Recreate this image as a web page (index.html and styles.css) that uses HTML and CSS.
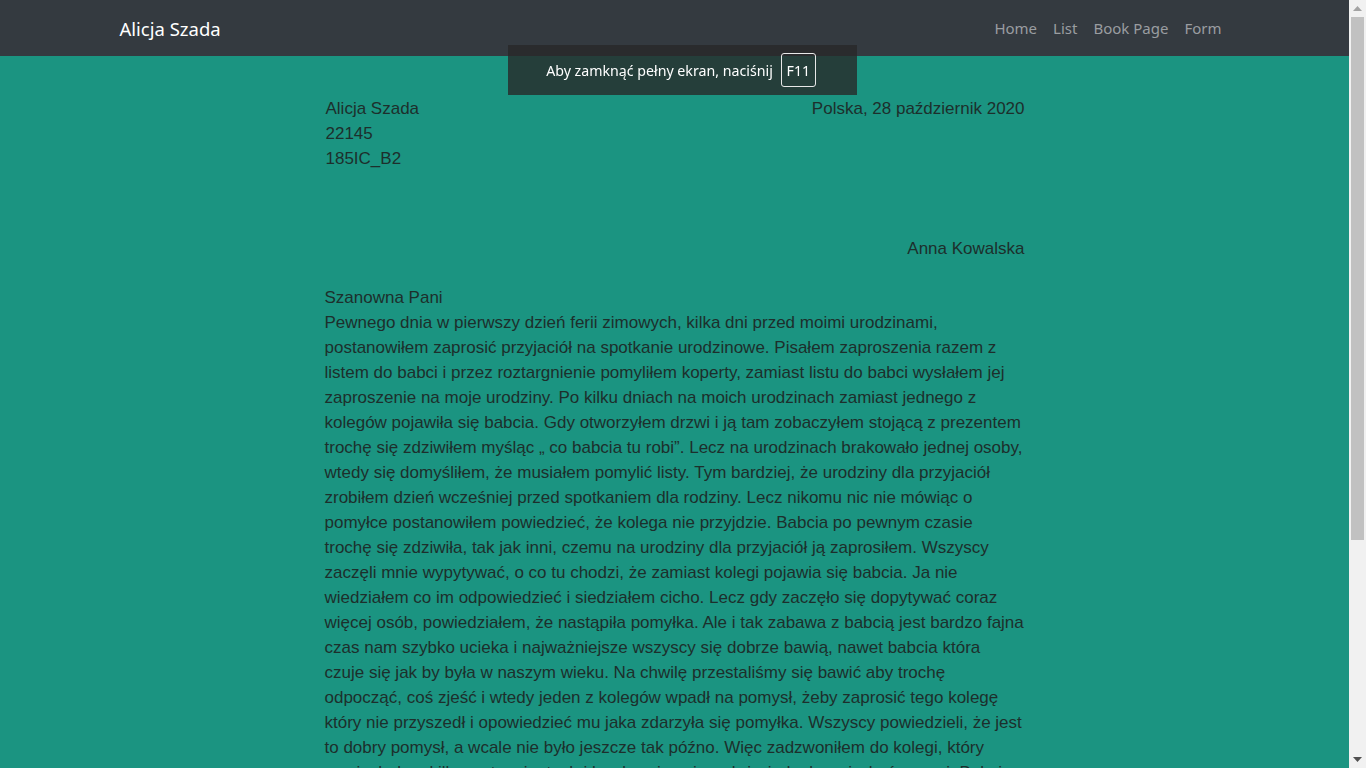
FILE: index.html
```html
<!DOCTYPE html>
<html lang="pl">
<head>
<meta charset="utf-8">
<title>List</title>
<link rel="stylesheet" href="styles.css">
</head>
<body>
<nav class="navbar">
  <div class="nav-container">
    <a class="brand" href="#">Alicja Szada</a>
    <ul class="nav-links">
      <li><a href="#">Home</a></li>
      <li><a href="#">List</a></li>
      <li><a href="#">Book Page</a></li>
      <li><a href="#">Form</a></li>
    </ul>
  </div>
</nav>

<main class="letter">
  <div class="letter-head">
    <div class="sender">
      <div>Alicja Szada</div>
      <div>22145</div>
      <div>185IC_B2</div>
    </div>
    <div class="date">Polska, 28 październik 2020</div>
  </div>
  <div class="recipient">Anna Kowalska</div>
  <div class="greeting">Szanowna Pani</div>
  <p class="body-text">Pewnego dnia w pierwszy dzień ferii zimowych, kilka dni przed moimi urodzinami, postanowiłem zaprosić przyjaciół na spotkanie urodzinowe. Pisałem zaproszenia razem z listem do babci i przez roztargnienie pomyliłem koperty, zamiast listu do babci wysłałem jej zaproszenie na moje urodziny. Po kilku dniach na moich urodzinach zamiast jednego z kolegów pojawiła się babcia. Gdy otworzyłem drzwi i ją tam zobaczyłem stojącą z prezentem trochę się zdziwiłem myśląc „ co babcia tu robi”. Lecz na urodzinach brakowało jednej osoby, wtedy się domyśliłem, że musiałem pomylić listy. Tym bardziej, że urodziny dla przyjaciół zrobiłem dzień wcześniej przed spotkaniem dla rodziny. Lecz nikomu nic nie mówiąc o pomyłce postanowiłem powiedzieć, że kolega nie przyjdzie. Babcia po pewnym czasie trochę się zdziwiła, tak jak inni, czemu na urodziny dla przyjaciół ją zaprosiłem. Wszyscy zaczęli mnie wypytywać, o co tu chodzi, że zamiast kolegi pojawia się babcia. Ja nie wiedziałem co im odpowiedzieć i siedziałem cicho. Lecz gdy zaczęło się dopytywać coraz więcej osób, powiedziałem, że nastąpiła pomyłka. Ale i tak zabawa z babcią jest bardzo fajna czas nam szybko ucieka i najważniejsze wszyscy się dobrze bawią, nawet babcia która czuje się jak by była w naszym wieku. Na chwilę przestaliśmy się bawić aby trochę odpocząć, coś zjeść i wtedy jeden z kolegów wpadł na pomysł, żeby zaprosić tego kolegę który nie przyszedł i opowiedzieć mu jaka zdarzyła się pomyłka. Wszyscy powiedzieli, że jest to dobry pomysł, a wcale nie było jeszcze tak późno. Więc zadzwoniłem do kolegi, który przyjechał po kilkunastu minutach i bardzo się ucieszył, że jednak może być z nami. Babcia opowiedziała mu całą historię z kopertami, a wszyscy śmialiśmy się do łez. Do końca wieczoru bawiliśmy się razem, grając w różne gry i jedząc tort, który babcia przyniosła ze sobą. Było to jedno z najlepszych urodzin, jakie kiedykolwiek miałem, i na pewno długo o nich nie zapomnę.</p>
  <div class="closing">Z poważaniem</div>
  <div class="signature">Alicja Szada</div>
</main>

<div class="fs-toast">
  <span>Aby zamknąć pełny ekran, naciśnij</span>
  <span class="key">F11</span>
</div>

<div class="scrollbar" aria-hidden="true">
  <div class="sb-btn">
    <svg width="9" height="5" viewBox="0 0 9 5"><polygon points="0,5 9,5 4.5,0" fill="#a3a3a3"/></svg>
  </div>
  <div class="sb-track">
    <div class="sb-thumb"></div>
  </div>
  <div class="sb-btn">
    <svg width="9" height="5" viewBox="0 0 9 5"><polygon points="0,0 9,0 4.5,5" fill="#505050"/></svg>
  </div>
</div>
</body>
</html>
```

FILE: styles.css
```css
html {
  overflow: hidden;
}

body {
  margin: 0 17px 0 0;
  background: #1b9481;
  color: #1d2f2c;
  font-family: "Liberation Sans", Arial, sans-serif;
  font-size: 17px;
  line-height: 25px;
}

.navbar {
  background: #343a40;
  height: 56px;
}

.nav-container {
  max-width: 1110px;
  height: 56px;
  margin: 0 auto;
  padding: 0 15px;
  display: flex;
  align-items: center;
  justify-content: space-between;
  font-family: "Noto Sans", "Open Sans", sans-serif;
}

.brand {
  color: #fff;
  text-decoration: none;
  font-size: 18.5px;
  line-height: 30px;
  margin-top: 1px;
}

.nav-links {
  list-style: none;
  margin: 0;
  padding: 0;
  display: flex;
}

.nav-links a {
  display: block;
  padding: 8px 8px;
  color: #9a9da0;
  text-decoration: none;
  font-size: 15px;
  line-height: 24px;
}

.letter {
  width: 700px;
  margin: 0 auto;
  padding: 40px 0 40px;
}

.letter-head {
  display: flex;
  justify-content: space-between;
  align-items: flex-start;
  margin-bottom: 65px;
}

.sender {
  padding-left: 1px;
}

.recipient {
  text-align: right;
  margin-bottom: 24px;
}

.body-text {
  margin: 0 0 25px;
}

.closing,
.signature {
  text-align: right;
}

.fs-toast {
  position: fixed;
  left: 508px;
  top: 45px;
  width: 349px;
  height: 50px;
  background: rgba(40, 40, 40, 0.8);
  color: #ffffff;
  font-family: "Noto Sans", "Open Sans", sans-serif;
  font-size: 14.2px;
  display: flex;
  align-items: center;
  justify-content: center;
  gap: 8px;
  box-sizing: border-box;
  padding-right: 3px;
}

.fs-toast .key {
  border: 1px solid #e8e8e8;
  border-radius: 3px;
  width: 35px;
  height: 34px;
  box-sizing: border-box;
  display: flex;
  align-items: center;
  justify-content: center;
}

.scrollbar {
  position: fixed;
  top: 0;
  right: 0;
  width: 17px;
  height: 100vh;
  background: #f1f1f1;
  display: flex;
  flex-direction: column;
}

.sb-btn {
  height: 17px;
  flex: none;
  display: flex;
  align-items: center;
  justify-content: center;
}

.sb-track {
  flex: 1;
  padding: 0 2px;
}

.sb-thumb {
  height: 523px;
  background: #c1c1c1;
}
```
